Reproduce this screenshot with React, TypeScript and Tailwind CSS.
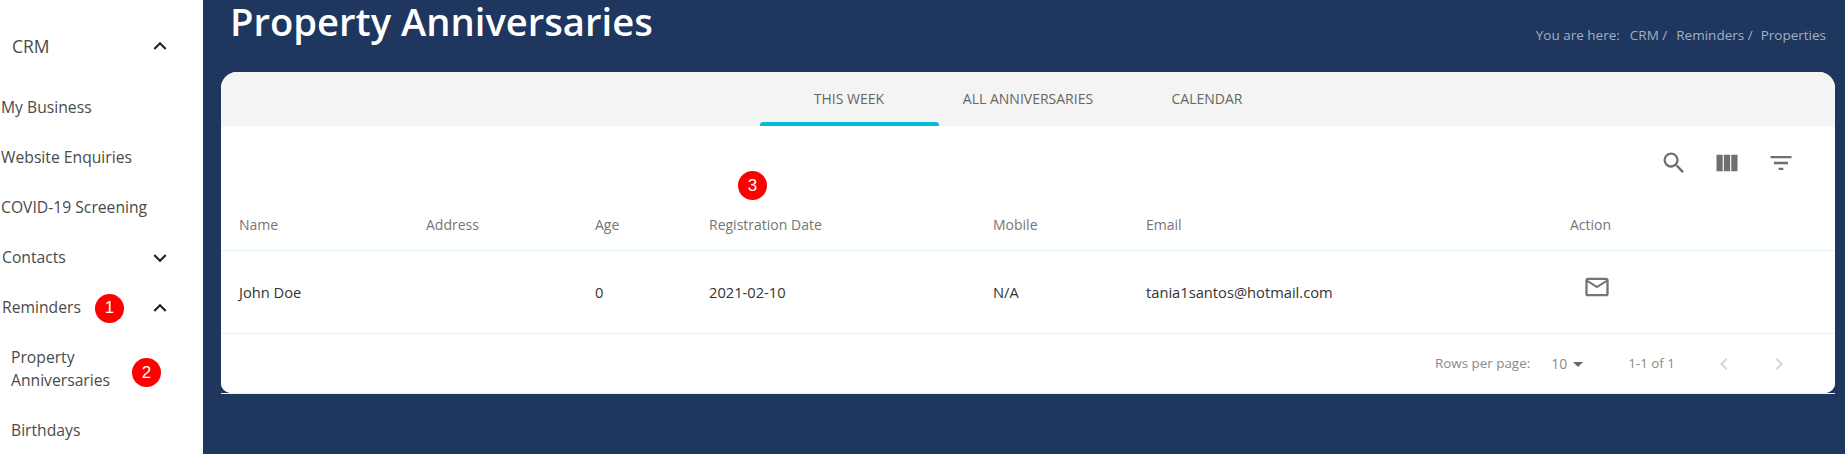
import { MdSearch, MdViewColumn, MdFilterList, MdMailOutline, MdExpandLess, MdExpandMore, MdChevronLeft, MdChevronRight, MdArrowDropDown } from "react-icons/md";

const Badge = ({ n }: { n: number }) => (
  <div className="w-[29px] h-[29px] rounded-full bg-[#fe0000] text-white text-[17px] flex items-center justify-center font-['Liberation_Sans',sans-serif]">
    {n}
  </div>
);

const SideItem = ({ label }: { label: string }) => (
  <div className="h-[50px] flex items-center pl-px">{label}</div>
);

const Sidebar = () => (
  <div className="w-[203px] shrink-0 bg-white text-[15.7px] text-[#4a4a4a]">
    <div className="h-[83px] pt-[21px] pl-3 pr-[30px] flex items-start justify-between">
      <div className="h-[50px] flex items-center text-[17.5px]">CRM</div>
      <div className="h-[50px] flex items-center"><MdExpandLess className="text-[26px] text-[#222]" /></div>
    </div>
    <SideItem label="My Business" />
    <SideItem label="Website Enquiries" />
    <SideItem label="COVID-19 Screening" />
    <div className="h-[50px] flex items-center pl-0.5 pr-[30px] justify-between">
      <span>Contacts</span>
      <MdExpandMore className="text-[26px] text-[#222]" />
    </div>
    <div className="h-[50px] flex items-center pl-0.5 pr-[30px]">
      <span>Reminders</span>
      <div className="ml-[14px]"><Badge n={1} /></div>
      <MdExpandLess className="ml-auto text-[26px] text-[#222]" />
    </div>
    <div className="h-[73px] flex items-center pl-[11px] pb-[2px] leading-[23px]">
      <div>Property<br />Anniversaries</div>
      <div className="ml-[22px] mt-[8px]"><Badge n={2} /></div>
    </div>
    <div className="h-[50px] flex items-center pl-[11px]">Birthdays</div>
  </div>
);

const Tabs = () => (
  <div className="h-[54px] bg-[#f4f4f4] flex justify-center text-[14px] text-[#666]">
    <div className="relative w-[179px] flex items-center justify-center pb-[1px]">
      THIS WEEK
      <div className="absolute left-0 right-0 bottom-0 h-1 bg-[#00bcd8] rounded-t-[3px]" />
    </div>
    <div className="w-[179px] flex items-center justify-center pb-[1px]">ALL ANNIVERSARIES</div>
    <div className="w-[179px] flex items-center justify-center pb-[1px]">CALENDAR</div>
  </div>
);

const cols = "grid grid-cols-[187px_169px_114px_284px_153px_424px_1fr] pl-[18px]";

const Table = () => (
  <div>
    <div className={`${cols} h-[53px] items-center border-b border-[#e0f3fa] text-[14px] text-[#757575]`}>
      <div>Name</div>
      <div>Address</div>
      <div>Age</div>
      <div>Registration Date</div>
      <div>Mobile</div>
      <div>Email</div>
      <div>Action</div>
    </div>
    <div className={`${cols} h-[83px] items-center border-b border-[#e0f3fa] text-[14.7px] text-[#333]`}>
      <div>John Doe</div>
      <div></div>
      <div>0</div>
      <div>2021-02-10</div>
      <div>N/A</div>
      <div>tania1santos@hotmail.com</div>
      <div className="pl-[13px] pb-[10px]"><MdMailOutline className="text-[28px] text-[#757575]" /></div>
    </div>
  </div>
);

const Pagination = () => (
  <div className="h-[59px] flex items-center text-[13.4px] text-[#8a8a8a]">
    <div className="ml-auto">Rows per page:</div>
    <div className="ml-[21px] text-[14px]">10</div>
    <MdArrowDropDown className="text-[24px] text-[#666] ml-[-1px]" />
    <div className="ml-[38px]">1-1 of 1</div>
    <MdChevronLeft className="ml-[37px] text-[24px] text-[#d5d5d5]" />
    <MdChevronRight className="ml-[31px] text-[24px] text-[#d5d5d5] mr-[44px]" />
  </div>
);

export default function App() {
  return (
    <div className="w-[1845px] h-[454px] overflow-hidden flex bg-[#1f365e] font-['Open_Sans',sans-serif]">
      <Sidebar />
      <div className="flex-1 pl-[18px] pr-[10px]">
        <div className="h-[72px] flex justify-between">
          <h1 className="pl-[9px] text-[38.2px] leading-[42px] font-semibold text-white">Property Anniversaries</h1>
          <div className="pt-[25px] mr-[9px] text-[13.5px] leading-[20px] text-[#a3afc2] flex">
            <span className="mr-[10px]">You are here:</span>
            <span className="mr-[9px]">CRM /</span>
            <span className="mr-[8px]">Reminders /</span>
            <span>Properties</span>
          </div>
        </div>
        <div className="h-[321px] bg-[#f4f4f4] rounded-t-[16px] rounded-b-[10px] overflow-hidden">
          <Tabs />
          <div className="bg-white rounded-t-[4px] h-[267px]">
            <div className="h-[72px] pr-[40px] flex justify-end items-start pt-[23px] text-[#6f6f6f]">
              <MdSearch className="text-[28px]" />
              <MdViewColumn className="ml-[25px] text-[28px]" />
              <MdFilterList className="ml-[26px] text-[28px]" />
            </div>
            <div className="relative">
              <div className="absolute left-[517px] top-[-27px]">
                <Badge n={3} />
              </div>
              <Table />
            </div>
            <Pagination />
          </div>
        </div>
        <div className="h-px bg-[#e0f3fa]" />
      </div>
    </div>
  );
}
